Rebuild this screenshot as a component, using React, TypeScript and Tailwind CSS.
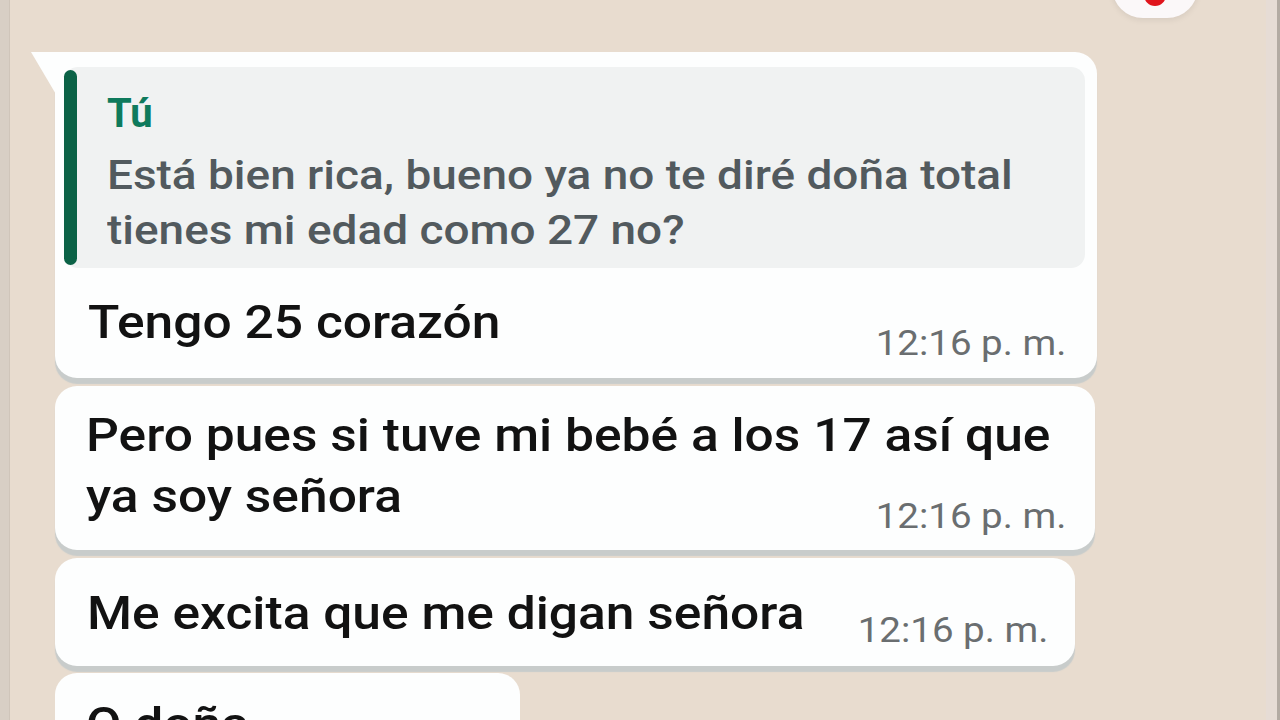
const font = { fontFamily: "Roboto, 'Noto Sans', sans-serif" };

const Time = ({ className = "" }: { className?: string }) => (
  <span
    className={`inline-block origin-right scale-x-[1.1] text-[35px] leading-[35px] text-[#6a6e70] whitespace-nowrap ${className}`}
  >
    12:16 p. m.
  </span>
);

const Msg = ({ children, className = "" }: { children: React.ReactNode; className?: string }) => (
  <div className={`origin-left scale-x-[1.12] text-[46px] font-medium text-[#121212] whitespace-nowrap ${className}`}>
    {children}
  </div>
);

export default function App() {
  return (
    <div className="w-[1280px] h-[720px] overflow-hidden bg-[#e8dccf] flex relative" style={font}>
      <div className="w-[10px] shrink-0 bg-[#d8cfc5] border-r border-[#cfc5ba]" />

      <div className="flex-1 flex flex-col pt-[52px] pl-[45px]">
        {/* bubble with quoted reply */}
        <div className="relative w-[1042px] bg-[#fdfefe] rounded-[22px] rounded-tl-none pl-[9px] pr-[12px] pt-[15px] pb-[17px] shadow-[0_6px_1px_#c8cccb] mb-[8px]">
          <svg className="absolute -left-[24px] top-0" width="26" height="44" viewBox="0 0 26 44">
            <path d="M0 0 H26 V44 Z" fill="#fdfefe" />
          </svg>
          <div className="flex h-[201px] bg-[#f0f2f2] rounded-[14px]">
            <div className="w-[13px] shrink-0 bg-[#0b6246] rounded-full my-[3px]" />
            <div className="pl-[30px] pt-[27px]">
              <div className="text-[40px] leading-[40px] font-bold text-[#0e7a5c]">Tú</div>
              <div className="origin-left scale-x-[1.12] text-[41px] leading-[55px] font-medium text-[#525a5e] mt-[14px] whitespace-nowrap">
                Está bien rica, bueno ya no te diré doña total
                <br />
                tienes mi edad como 27 no?
              </div>
            </div>
          </div>
          <div className="pl-[24px] pr-[19px] pt-[28px] flex flex-col">
            <Msg className="leading-[52px]">Tengo 25 corazón</Msg>
            <div className="flex justify-end -mt-[22px]">
              <Time />
            </div>
          </div>
        </div>

        <div className="w-[1040px] bg-[#fdfefe] rounded-[22px] pl-[31px] pr-[29px] pt-[19px] pb-[16px] shadow-[0_6px_1px_#c8cccb] mb-[8px] flex flex-col">
          <Msg className="leading-[61px]">
            Pero pues si tuve mi bebé a los 17 así que
            <br />
            ya soy señora
          </Msg>
          <div className="flex justify-end -mt-[28px]">
            <Time />
          </div>
        </div>

        <div className="w-[1020px] bg-[#fdfefe] rounded-[22px] pl-[32px] pr-[27px] pt-[29px] pb-[18px] shadow-[0_6px_1px_#c8cccb] mb-[7px] flex items-end justify-between">
          <Msg className="leading-[52px] mb-[9px]">Me excita que me digan señora</Msg>
          <Time />
        </div>

        <div className="w-[465px] bg-[#fdfefe] rounded-[22px] pl-[31px] pt-[25px] pb-[20px]">
          <Msg className="leading-[52px]">O doña</Msg>
        </div>
      </div>

      <div className="w-[14px] shrink-0 bg-[#e6dcd5] border-r-[3px] border-[#b3aba3]" />

      {/* reaction badge */}
      <div className="absolute left-[1112px] -top-[44px] w-[86px] h-[62px] rounded-full bg-[#fbf8f9] shadow-[0_2px_6px_rgba(0,0,0,0.08)] flex items-end justify-center pb-[12px]">
        <div className="w-[22px] h-[12px] rounded-b-full bg-[#e0141c]" />
      </div>
    </div>
  );
}
